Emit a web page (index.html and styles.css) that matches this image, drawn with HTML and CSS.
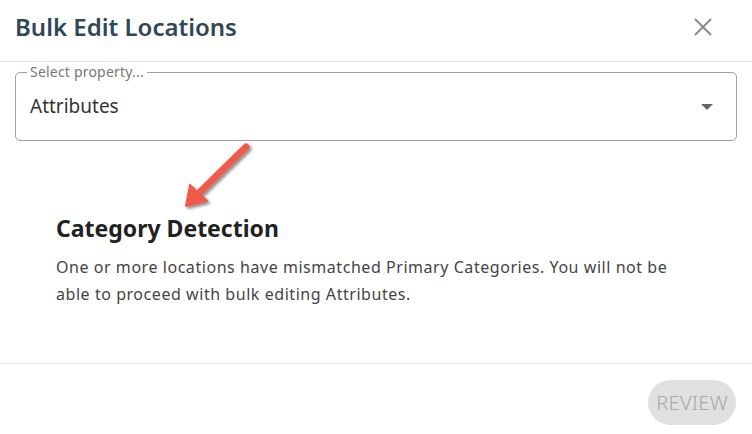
FILE: index.html
```html
<!DOCTYPE html>
<html>
<head>
    <title>Bulk Edit Locations</title>
    <link rel="stylesheet" href="styles.css">
</head>
<body>
    <div class="dialog">
        <div class="dialog-header">
            <h2 class="dialog-title">Bulk Edit Locations</h2>
            <button class="close-button" aria-label="Close">
                <svg width="18" height="18" viewBox="0 0 18 18">
                    <path d="M1 1 L17 17 M17 1 L1 17" stroke="#8a8a8a" stroke-width="2" fill="none"/>
                </svg>
            </button>
        </div>

        <fieldset class="select-field">
            <legend>Select property...</legend>
            <div class="select-value">
                <span>Attributes</span>
                <svg class="select-caret" width="12" height="6" viewBox="0 0 12 6">
                    <path d="M0 0 L12 0 L6 6 Z" fill="#666"/>
                </svg>
            </div>
        </fieldset>

        <div class="notice">
            <h3>Category Detection</h3>
            <p>One or more locations have mismatched Primary Categories. You will not be able to proceed with bulk editing Attributes.</p>
        </div>

        <div class="dialog-footer">
            <button class="review-button" disabled>REVIEW</button>
        </div>

        <!-- annotation arrow drawn over the screenshot -->
        <svg class="callout-arrow" width="90" height="90" viewBox="0 0 90 90">
            <defs>
                <filter id="shadow" x="-30%" y="-30%" width="160%" height="160%">
                    <feDropShadow dx="2" dy="2" stdDeviation="1.5" flood-color="#000" flood-opacity="0.45"/>
                </filter>
            </defs>
            <g filter="url(#shadow)" fill="#f05a4c" stroke="#f05a4c">
                <line x1="70" y1="9" x2="24" y2="54" stroke-width="7" stroke-linecap="round"/>
                <path d="M10 68 L14 47 L31 63 Z" stroke-width="2" stroke-linejoin="round"/>
            </g>
        </svg>
    </div>
</body>
</html>
```

FILE: styles.css
```css
body {
    margin: 0;
    padding: 0;
    background: #fff;
    font-family: "Noto Sans", "Open Sans", sans-serif;
}

.dialog {
    position: relative;
    width: 752px;
    height: 434px;
}

.dialog-header {
    display: flex;
    justify-content: space-between;
    align-items: center;
    padding: 12px 40px 19px 15px;
    border-bottom: 1px solid #e2e2e2;
}

.dialog-title {
    margin: 0;
    font-size: 24px;
    line-height: 30px;
    font-weight: 600;
    color: #304755;
}

.close-button {
    background: none;
    border: none;
    padding: 0;
    width: 18px;
    height: 18px;
    cursor: pointer;
}

.close-button svg {
    display: block;
}

.select-field {
    margin: 2px 15px 0 15px;
    padding: 14px 23px 22px 14px;
    border: 1px solid #a0a0a0;
    border-radius: 5px;
}

.select-field legend {
    margin-left: -3px;
    padding: 0 3px;
    font-size: 14px;
    line-height: 16px;
    letter-spacing: 0.2px;
    color: #777;
}

.select-value {
    display: flex;
    justify-content: space-between;
    align-items: center;
    font-size: 19px;
    line-height: 24px;
    color: #333;
}

.select-caret {
    display: block;
    margin-top: 2px;
}

.notice {
    padding: 72px 56px 0 56px;
}

.notice h3 {
    margin: 0;
    font-size: 23px;
    line-height: 30px;
    font-weight: 700;
    color: #222;
}

.notice p {
    margin: 11px 0 0 0;
    font-size: 16px;
    line-height: 27px;
    letter-spacing: 0.55px;
    color: #444;
}

.dialog-footer {
    display: flex;
    justify-content: flex-end;
    margin-top: 55px;
    padding: 16px 16px 0 0;
    border-top: 1px solid #e2e2e2;
}

.review-button {
    height: 45px;
    padding: 0 8px;
    border: none;
    border-radius: 23px;
    background: #e0e0e0;
    color: #a8a8a8;
    font-family: "Noto Sans", "Open Sans", sans-serif;
    font-size: 20px;
    font-weight: 300;
    letter-spacing: 0.3px;
}

.callout-arrow {
    position: absolute;
    left: 176px;
    top: 138px;
}
```
